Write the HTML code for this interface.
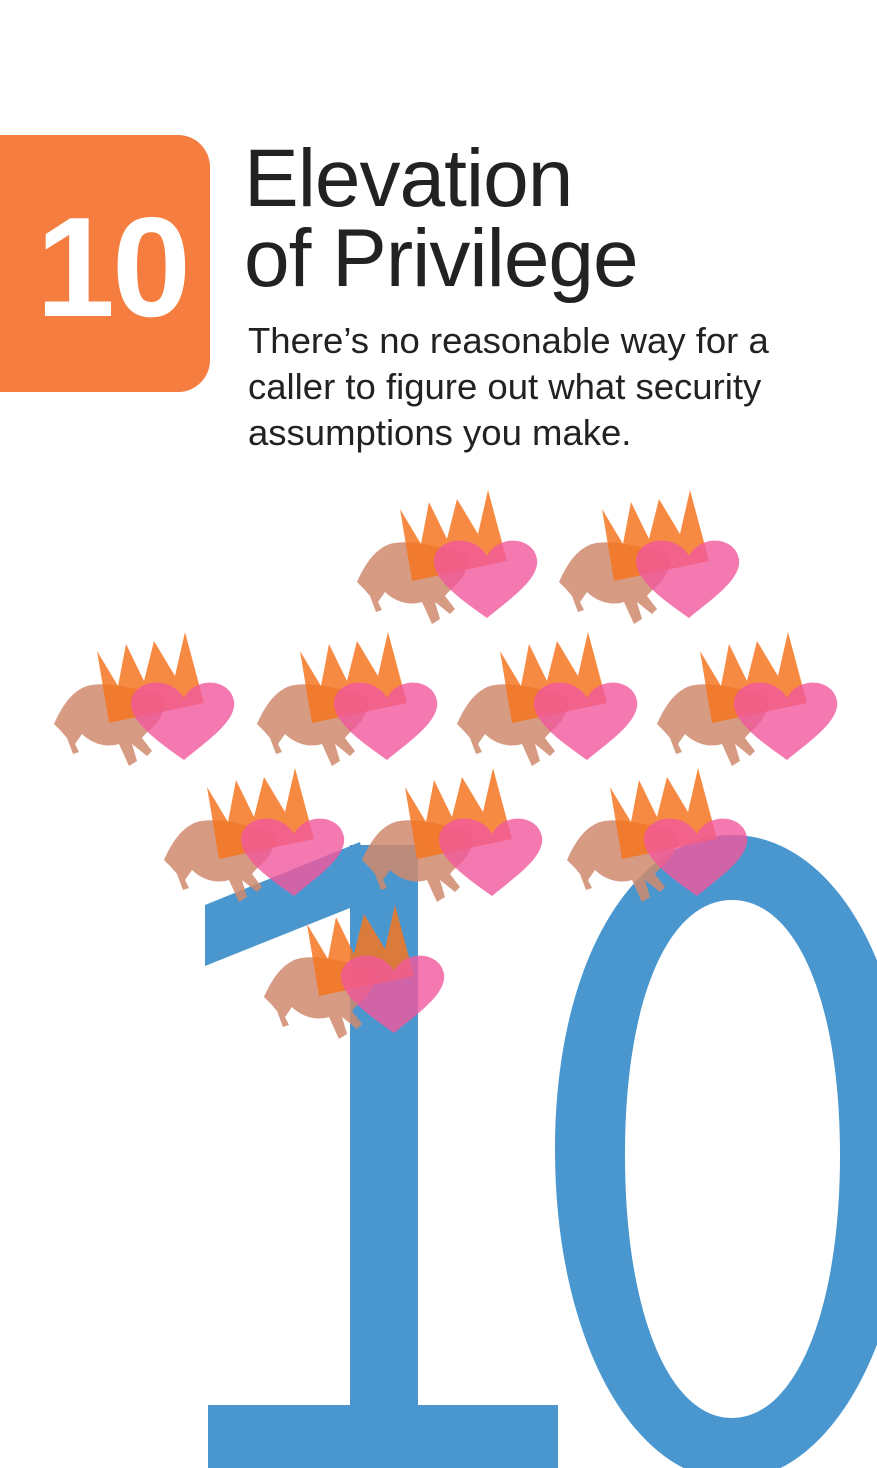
<!DOCTYPE html>
<html><head><style>
body{margin:0;width:877px;height:1468px;background:#fff;position:relative;overflow:hidden;font-family:"Liberation Sans",sans-serif}
.box{position:absolute;left:0;top:135px;width:210px;height:257px;background:#f47d3f;border-radius:0 32px 32px 0}
.box span{position:absolute;left:36px;top:62px;color:#fff;font-weight:bold;font-size:142px;letter-spacing:-3px;line-height:1}
.t{position:absolute;left:244px;color:#222;font-size:82px;font-weight:300;line-height:1;letter-spacing:-1px}
.d{position:absolute;left:248px;top:318px;font-size:36.5px;line-height:46px;color:#222;white-space:nowrap}
svg{position:absolute;left:0;top:0}
</style></head><body>
<div class="box"><span>10</span></div>
<div class="t" style="top:138px">Elevation</div>
<div class="t" style="top:218px">of Privilege</div>
<div class="d">There’s no reasonable way for a<br>caller to figure out what security<br>assumptions you make.</div>
<svg width="877" height="1468" viewBox="0 0 877 1468">
<defs>
<g id="g">
<path d="M7 98 C15 80 25 65 40 60 C60 55 85 62 110 68 C120 72 120 80 115 88 C110 100 100 105 95 112 L105 125 L100 130 L85 118 L90 135 L82 140 L72 118 C60 122 45 118 35 108 L28 118 L32 126 L26 128 L20 112 L14 105 Z" fill="#cf8a6c" opacity="0.85"/>
<path d="M62 97 L50 25 L71 60 L79 18 L97 55 L107 15 L128 50 L138 6 L157 77 Z" fill="#f47521" opacity="0.85"/>
<path d="M137 72 C125 50 88 52 84 75 C82 95 110 115 137 134 C160 115 190 95 187 75 C183 52 148 50 137 72 Z" fill="#f1579c" opacity="0.8"/>
</g>
</defs>
<g fill="#4a97d0">
<path d="M208 1405 H558 V1468 H208 Z"/>
<path d="M350 845 H418 V1405 H350 Z"/>
<path d="M205 905 L360 842 L370 900 L205 966 Z"/>
<path fill-rule="evenodd" d="M732 835 C830 835 910 960 910 1150 C910 1340 830 1480 732 1480 C634 1480 555 1340 555 1150 C555 960 634 835 732 835 Z M732 900 C668 900 625 1000 625 1155 C625 1310 668 1418 732 1418 C796 1418 840 1310 840 1155 C840 1000 796 900 732 900 Z"/>
</g>
<use href="#g" x="350" y="484"/>
<use href="#g" x="552" y="484"/>
<use href="#g" x="47" y="626"/>
<use href="#g" x="250" y="626"/>
<use href="#g" x="450" y="626"/>
<use href="#g" x="650" y="626"/>
<use href="#g" x="157" y="762"/>
<use href="#g" x="355" y="762"/>
<use href="#g" x="560" y="762"/>
<use href="#g" x="257" y="899"/>
</svg>
</body></html>
